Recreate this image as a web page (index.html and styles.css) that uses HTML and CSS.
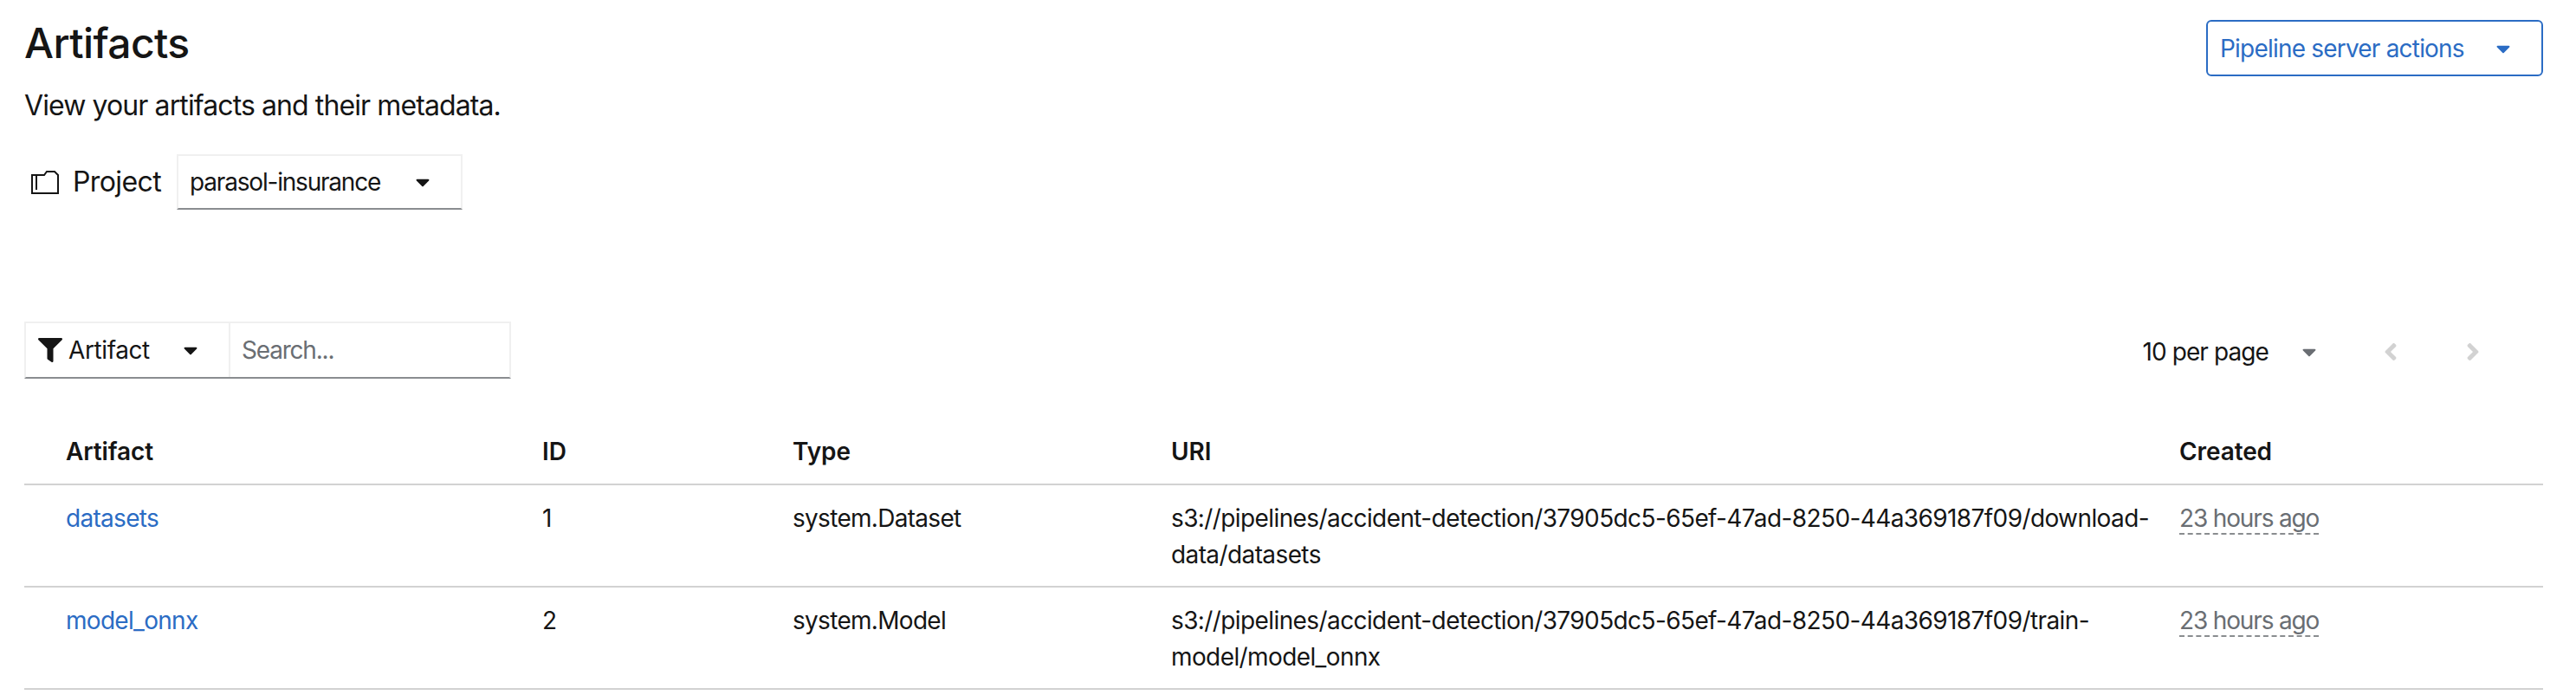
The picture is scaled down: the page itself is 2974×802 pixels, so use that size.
FILE: index.html
```html
<!DOCTYPE html>
<html>

<head>
    <title>Artifacts</title>
    <link rel="stylesheet" href="styles.css">
</head>

<body>
    <div class="page-head">
        <div>
            <h1>Artifacts</h1>
            <p class="subtitle">View your artifacts and their metadata.</p>
        </div>
        <button type="button" class="server-actions">
            <span>Pipeline server actions</span>
            <svg class="caret" viewBox="0 0 320 512"><path d="M31.3 192h257.3c17.8 0 26.7 21.5 14.1 34.1L174.1 354.8c-7.8 7.8-20.5 7.8-28.3 0L17.2 226.1C4.6 213.5 13.5 192 31.3 192z"/></svg>
        </button>
    </div>

    <div class="project-row">
        <svg class="project-icon" viewBox="0 0 32 27"><path d="M1 26V5h14l3-4h9l4 4v21zM6 22V5" fill="none" stroke="#151515" stroke-width="2"/></svg>
        <span class="project-label">Project</span>
        <div class="project-select">
            <span>parasol-insurance</span>
            <svg class="caret" viewBox="0 0 320 512"><path d="M31.3 192h257.3c17.8 0 26.7 21.5 14.1 34.1L174.1 354.8c-7.8 7.8-20.5 7.8-28.3 0L17.2 226.1C4.6 213.5 13.5 192 31.3 192z"/></svg>
        </div>
    </div>

    <div class="toolbar">
        <div class="filter">
            <div class="filter-select">
                <svg class="filter-icon" viewBox="0 0 512 512"><path d="M487.976 0H24.028C2.71 0-8.047 25.866 7.058 40.971L192 225.941V432c0 7.831 3.821 15.17 10.237 19.662l80 55.98C298.02 518.69 320 507.493 320 487.98V225.941l184.947-184.97C520.021 25.896 509.338 0 487.976 0z"/></svg>
                <span>Artifact</span>
                <svg class="caret" viewBox="0 0 320 512"><path d="M31.3 192h257.3c17.8 0 26.7 21.5 14.1 34.1L174.1 354.8c-7.8 7.8-20.5 7.8-28.3 0L17.2 226.1C4.6 213.5 13.5 192 31.3 192z"/></svg>
            </div>
            <input type="text" class="search" placeholder="Search...">
        </div>
        <div class="pagination">
            <span>10 per page</span>
            <svg class="caret caret-muted" viewBox="0 0 320 512"><path d="M31.3 192h257.3c17.8 0 26.7 21.5 14.1 34.1L174.1 354.8c-7.8 7.8-20.5 7.8-28.3 0L17.2 226.1C4.6 213.5 13.5 192 31.3 192z"/></svg>
            <svg class="chevron chevron-prev" viewBox="0 0 256 512"><path d="M31.7 239l136-136c9.4-9.4 24.6-9.4 33.9 0l22.6 22.6c9.4 9.4 9.4 24.6 0 33.9L127.9 256l96.4 96.4c9.4 9.4 9.4 24.6 0 33.9L201.7 409c-9.4 9.4-24.6 9.4-33.9 0l-136-136c-9.5-9.4-9.5-24.6-.1-34z"/></svg>
            <svg class="chevron chevron-next" viewBox="0 0 256 512"><path d="M224.3 273l-136 136c-9.4 9.4-24.6 9.4-33.9 0l-22.6-22.6c-9.4-9.4-9.4-24.6 0-33.9l96.4-96.4-96.4-96.4c-9.4-9.4-9.4-24.6 0-33.9L54.3 103c9.4-9.4 24.6-9.4 33.9 0l136 136c9.5 9.4 9.5 24.6.1 34z"/></svg>
        </div>
    </div>

    <table class="artifacts">
        <colgroup>
            <col class="col-artifact">
            <col class="col-id">
            <col class="col-type">
            <col class="col-uri">
            <col>
        </colgroup>
        <thead>
            <tr>
                <th>Artifact</th>
                <th>ID</th>
                <th>Type</th>
                <th>URI</th>
                <th>Created</th>
            </tr>
        </thead>
        <tbody>
            <tr>
                <td><a href="#">datasets</a></td>
                <td>1</td>
                <td>system.Dataset</td>
                <td class="uri">s3://pipelines/accident-detection/37905dc5-65ef-47ad-8250-44a369187f09/download-<br>data/datasets</td>
                <td><span class="timestamp">23 hours ago</span></td>
            </tr>
            <tr>
                <td><a href="#">model_onnx</a></td>
                <td>2</td>
                <td>system.Model</td>
                <td class="uri">s3://pipelines/accident-detection/37905dc5-65ef-47ad-8250-44a369187f09/train-<br>model/model_onnx</td>
                <td><span class="timestamp">23 hours ago</span></td>
            </tr>
        </tbody>
    </table>
</body>

</html>
```

FILE: styles.css
```css
body {
    margin: 0;
    padding: 0 38px 0 28px;
    background-color: #fff;
    color: #151515;
    font-family: 'Inter', 'Liberation Sans', sans-serif;
    font-size: 28px;
    line-height: 42px;
    letter-spacing: -0.7px;
}

.page-head {
    display: flex;
    justify-content: space-between;
    align-items: flex-start;
    padding-top: 23px;
}

h1 {
    margin: 2px 0 0;
    font-size: 48px;
    font-weight: 500;
    line-height: 50px;
    letter-spacing: -0.6px;
}

.subtitle {
    margin: 23px 0 0;
    font-size: 32px;
    line-height: 48px;
    letter-spacing: -0.9px;
}

.server-actions {
    display: flex;
    align-items: center;
    justify-content: space-between;
    box-sizing: border-box;
    width: 389px;
    height: 65px;
    padding: 0 36px 0 14px;
    background-color: #fff;
    border: 2px solid #2b6cc4;
    border-radius: 6px;
    color: #2b6cc4;
    font: inherit;
    letter-spacing: -0.8px;
}

.caret {
    width: 16px;
    height: 26px;
    fill: currentColor;
}

.caret-muted {
    fill: #6a6e73;
}

.project-row {
    display: flex;
    align-items: center;
    margin-top: 32px;
    padding-left: 8px;
}

.project-icon {
    width: 32px;
    height: 27px;
    margin-right: 16px;
}

.project-label {
    margin-right: 18px;
    font-size: 32px;
    letter-spacing: -0.6px;
}

.project-select {
    display: flex;
    align-items: center;
    justify-content: space-between;
    box-sizing: border-box;
    width: 330px;
    height: 64px;
    padding: 0 36px 0 13px;
    border: 2px solid #f0f0f0;
    border-bottom-color: #8a8d90;
    letter-spacing: -1.2px;
}

.toolbar {
    display: flex;
    justify-content: space-between;
    align-items: center;
    margin-top: 129px;
}

.filter {
    display: flex;
    box-sizing: border-box;
    width: 562px;
    height: 66px;
    border: 2px solid #f0f0f0;
    border-bottom-color: #8a8d90;
}

.filter-select {
    display: flex;
    align-items: center;
    box-sizing: border-box;
    width: 236px;
    padding-left: 14px;
    border-right: 2px solid #f0f0f0;
    letter-spacing: -0.4px;
}

.filter-icon {
    width: 28px;
    height: 30px;
    margin-right: 7px;
    fill: #151515;
}

.filter-select .caret {
    margin-left: 39px;
}

.search {
    flex: 1;
    min-width: 0;
    padding: 0 13px;
    border: none;
    outline: none;
    color: #151515;
    font: inherit;
    letter-spacing: -1.2px;
}

.search::placeholder {
    color: #6a6e73;
    opacity: 1;
}

.pagination {
    display: flex;
    align-items: center;
    padding-top: 4px;
    padding-right: 73px;
    letter-spacing: -0.9px;
}

.pagination .caret {
    margin-left: 39px;
}

.chevron {
    width: 16px;
    height: 32px;
    fill: #d2d2d2;
}

.chevron-prev {
    margin-left: 78px;
}

.chevron-next {
    margin-left: 79px;
}

.artifacts {
    width: 100%;
    margin-top: 41px;
    border-collapse: collapse;
    table-layout: fixed;
}

.col-artifact {
    width: 598px;
}

.col-id {
    width: 289px;
}

.col-type {
    width: 437px;
}

.col-uri {
    width: 1164px;
}

th,
td {
    padding: 0;
    text-align: left;
    vertical-align: top;
    border-bottom: 2px solid #d2d2d2;
}

th {
    height: 74px;
    padding-top: 6px;
    font-weight: 600;
    letter-spacing: -0.1px;
    vertical-align: middle;
}

td {
    padding-top: 17px;
    padding-bottom: 15px;
}

th:first-child,
td:first-child {
    padding-left: 48px;
}

a {
    color: #2b6cc4;
    text-decoration: none;
}

.uri {
    letter-spacing: -0.6px;
}

.timestamp {
    color: #6a6e73;
    letter-spacing: -1.15px;
    border-bottom: 2px dashed #8a8d90;
}
```
